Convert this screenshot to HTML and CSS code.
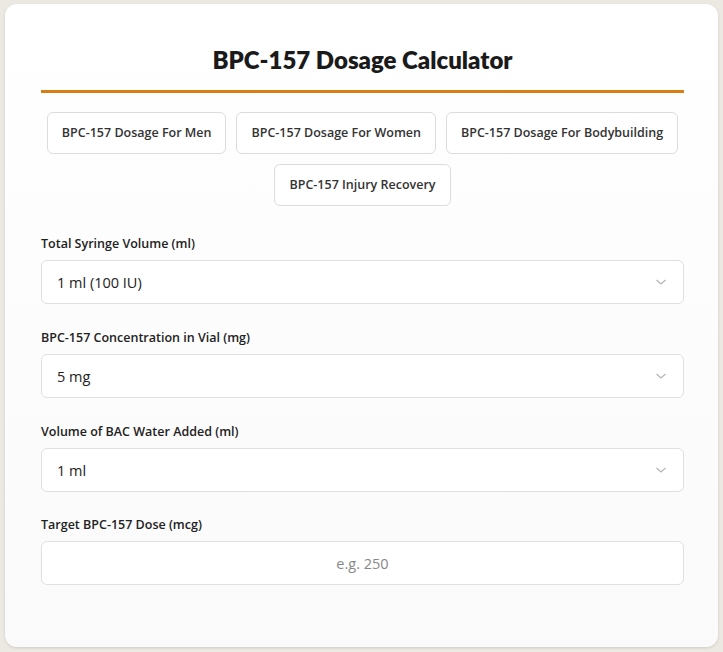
FILE: index.html
```html
<html>
	<head>
		<title>BPC-157 Dosage Calculator</title>
		<link rel="stylesheet" href="styles.css">
	</head>
	<body>
		<div class="calc">
			<h1 class="calc-title">BPC-157 Dosage Calculator</h1>
			<nav class="links">
				<a class="link-btn" href="#">BPC-157 Dosage For Men</a>
				<a class="link-btn" href="#">BPC-157 Dosage For Women</a>
				<a class="link-btn" href="#">BPC-157 Dosage For Bodybuilding</a>
				<a class="link-btn" href="#">BPC-157 Injury Recovery</a>
			</nav>
			<div class="field">
				<label>Total Syringe Volume (ml)</label>
				<div class="select">
					<span>1 ml (100 IU)</span>
					<svg class="chev" width="12" height="8" viewBox="0 0 12 8"><path d="M1.5 2 L6 6 L10.5 2" fill="none" stroke="#b5b5b5" stroke-width="1.3"/></svg>
				</div>
			</div>
			<div class="field">
				<label>BPC-157 Concentration in Vial (mg)</label>
				<div class="select">
					<span>5 mg</span>
					<svg class="chev" width="12" height="8" viewBox="0 0 12 8"><path d="M1.5 2 L6 6 L10.5 2" fill="none" stroke="#b5b5b5" stroke-width="1.3"/></svg>
				</div>
			</div>
			<div class="field">
				<label>Volume of BAC Water Added (ml)</label>
				<div class="select">
					<span>1 ml</span>
					<svg class="chev" width="12" height="8" viewBox="0 0 12 8"><path d="M1.5 2 L6 6 L10.5 2" fill="none" stroke="#b5b5b5" stroke-width="1.3"/></svg>
				</div>
			</div>
			<div class="field last">
				<label>Target BPC-157 Dose (mcg)</label>
				<input class="dose" type="text" placeholder="e.g. 250">
			</div>
		</div>
	</body>
</html>
```

FILE: styles.css
```css
body {
	background: #ece9e2;
	margin: 0;
	padding: 4px 5px 5px;
	font-family: "Open Sans", "Liberation Sans", sans-serif;
	color: #222;
}
.calc {
	background: linear-gradient(to bottom, #ffffff, #fafafa);
	border-radius: 12px;
	box-shadow: 0 1px 3px rgba(0, 0, 0, 0.12);
	padding: 41px 34px 62px 36px;
	height: 643px;
	box-sizing: border-box;
}
.calc-title {
	font-family: "Lato", sans-serif;
	font-weight: 800;
	font-size: 24px;
	line-height: 30px;
	text-align: center;
	color: #1a1a1a;
	margin: 0;
	padding-bottom: 15px;
	border-bottom: 3px solid #d97e12;
}
.links {
	display: flex;
	flex-wrap: wrap;
	justify-content: center;
	gap: 10px;
	margin: 19px 0 0;
}
.link-btn {
	display: block;
	border: 1px solid #dcdcdc;
	border-radius: 6px;
	background: #fff;
	padding: 0 14px;
	height: 42px;
	line-height: 40px;
	box-sizing: border-box;
	font-size: 12.5px;
	font-weight: 600;
	color: #333;
	text-decoration: none;
}
.field {
	margin-top: 29px;
}
.field + .field {
	margin-top: 25px;
}
.field.last {
	margin-top: 24px;
}
.field label {
	display: block;
	font-size: 12.5px;
	font-weight: 600;
	color: #222;
	margin-bottom: 8px;
}
.select {
	display: flex;
	align-items: center;
	justify-content: space-between;
	height: 44px;
	box-sizing: border-box;
	border: 1px solid #e0e0e0;
	border-radius: 6px;
	background: #fff;
	padding: 0 16px 0 15px;
	font-size: 14.5px;
	color: #222;
}
.dose {
	display: block;
	width: 100%;
	height: 44px;
	box-sizing: border-box;
	border: 1px solid #e0e0e0;
	border-radius: 6px;
	background: #fff;
	text-align: center;
	font-family: inherit;
	font-size: 14.5px;
	outline: none;
}
.dose::placeholder {
	color: #888;
}
```
